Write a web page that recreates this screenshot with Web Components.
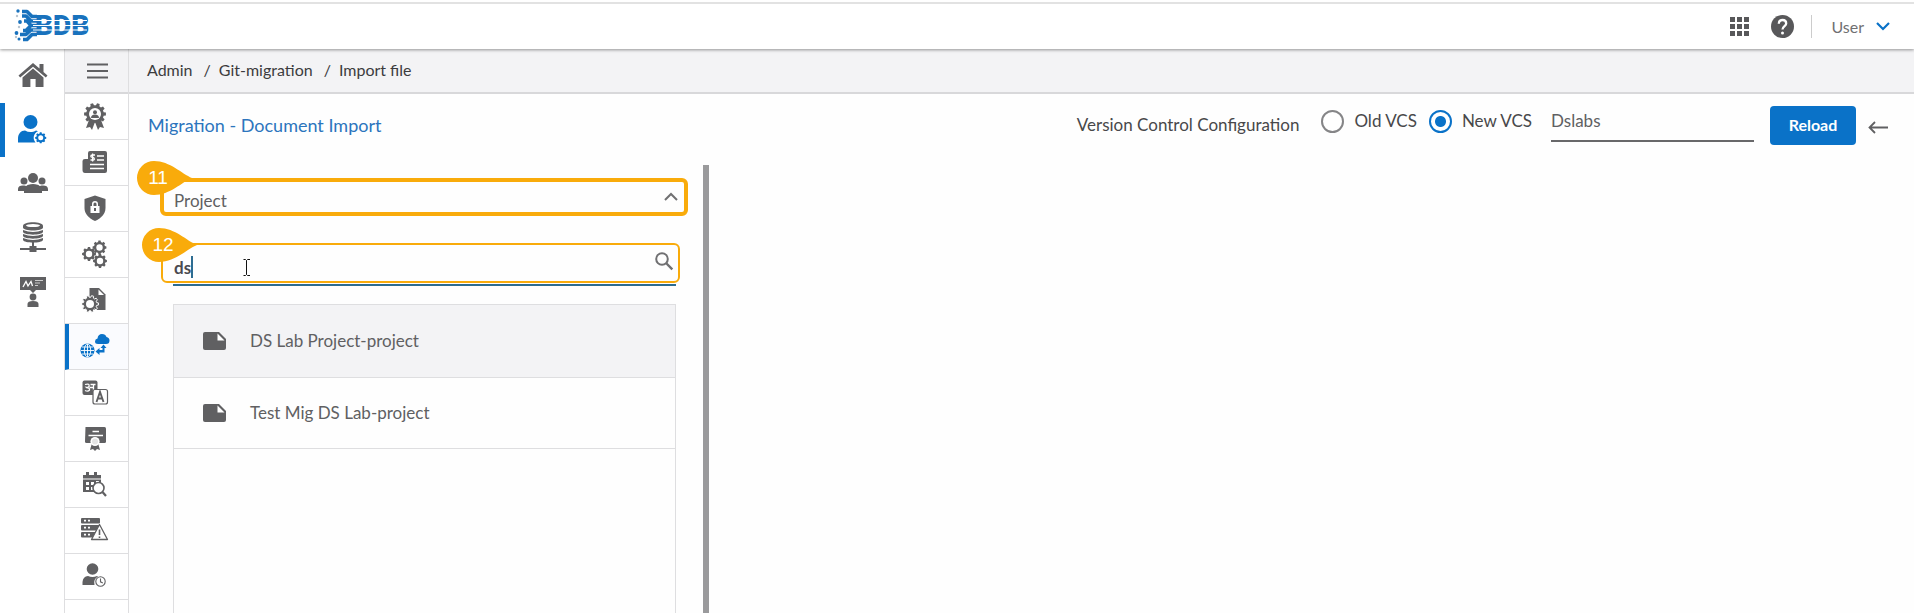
<!DOCTYPE html>
<html lang="en">
<head>
<meta charset="utf-8">
<meta name="viewport" content="width=device-width, initial-scale=1">
<title>Git-migration</title>
<style>
body {
  margin: 0;
  background: #fefefe;
  color: #48484a;
  font: 17px/24px Lato, "Open Sans", sans-serif;
}
</style>
</head>
<body>
<app-shell>
  <top-bar slot="top"></top-bar>
  <nav-rail slot="rail"></nav-rail>
  <side-menu slot="menu"></side-menu>
  <bread-crumb slot="crumbs">
    <a href="#">Admin</a>
    <a href="#">Git-migration</a>
    <a href="#">Import file</a>
  </bread-crumb>
  <vcs-toolbar slot="toolbar">Migration - Document Import</vcs-toolbar>
  <import-panel>
    <call-out slot="type" step="11" weight="thick">
      <type-select>Project</type-select>
    </call-out>
    <call-out slot="search" step="12">
      <search-field value="ds"></search-field>
    </call-out>
    <project-item selected>DS Lab Project-project</project-item>
    <project-item>Test Mig DS Lab-project</project-item>
  </import-panel>
</app-shell>

<script>
// outline of a small cog, centred on x,y
function cog(x, y, r, teeth = 8) {
  const points = [];
  for (let i = 0; i < teeth; i++) {
    const step = (Math.PI * 2) / teeth;
    [[-0.32, 0.8], [-0.2, 1], [0.2, 1], [0.32, 0.8]].forEach(([turn, size]) => {
      const angle = (i + turn) * step;
      points.push(
        (x + Math.cos(angle) * r * size).toFixed(2) + " " + (y + Math.sin(angle) * r * size).toFixed(2)
      );
    });
  }
  return `M${points.join("L")}Z`;
}

const icons = {
  home: `<path d="M15 3 0.5 15.5 2.2 17.5 15 6.7 27.8 17.5 29.5 15.5 25.5 12V4H21.5V8.6Z"/>
    <path d="M15 8.6 4.5 17.4V27H12.4V19H17.6V27H25.5V17.4Z"/>`,
  userCog: `<circle cx="12.5" cy="8" r="7"/><path d="M0 28.500V25C0 19.500 3 16.500 7 16.500 10.500 18.500 14.500 18.500 18 16.500L20 17.300A7 7 0 0 0 17.500 28.500Z"/>
    <path d="${cog(22.7, 23.8, 5.6)}"/><circle cx="22.7" cy="23.800" r="2.500" fill="#fff"/>`,
  group: `<circle cx="15" cy="10" r="5"/><circle cx="6" cy="13" r="3.500"/><circle cx="24" cy="13" r="3.500"/>
    <path d="M0 23V21C0 18 3 17 6.500 17.500Q8.500 18.500 9.500 17 13 16 15 16 17 16 20.500 17 21.500 18.500 23.500 17.500C27 17 30 18 30 21V23H24V25H6V23Z"/>`,
  database: `<path d="M5 4C5-1 25-1 25 4V5.500C25 9.500 5 9.500 5 5.500Z"/><ellipse cx="15" cy="3.600" rx="7" ry="1.500" fill="#fff"/>
    <path d="M5 8Q15 12 25 8V10C24 13.500 6 13.500 5 10ZM5 12Q15 16 25 12V14C24 17.500 6 17.500 5 14ZM5 16Q15 20 25 16V18C24 21.500 6 21.500 5 18Z"/>
    <path d="M14 20h2v4h2.500v2H28v2H18.500v2H11.500v-2H2v-2H11.500v-2H14Z"/>`,
  presenter: `<path d="M2 1H28V14H18L15 17 12 14H2Z"/><path d="M5 11 8 5.500 10 10 13 5.500 14.500 10" fill="none" stroke="#fff" stroke-width="1.300"/>
    <path d="M17 4.500h8M17 7h5M17 9.500h3" stroke="#ccc" stroke-width="1.200"/><circle cx="15" cy="21" r="3.400"/><path d="M9.500 31V28Q9.500 25 15 25T20.500 28V31Z"/>`,
  bars: `<path d="M4 7.500H25M4 14H25M4 20.500H25" fill="none" stroke="currentColor" stroke-width="2"/>`,
  badge: `<path d="M8 18 5 26 9 25 11 28 14 20 17 28 19 25 23 26 20 18Z"/><path d="${cog(14, 12, 11, 10)}"/>
    <circle cx="14" cy="12" r="6" fill="#fff"/><circle cx="14" cy="10.300" r="2"/><path d="M10 16Q10 12.500 14 12.500T18 16Z"/>`,
  news: `<path d="M7 5Q7 3 9 3H24Q26 3 26 5V23Q26 25 24 25H4Q1.500 25 1.500 22V13Q1.500 11 4 11H7Z"/>
    <g fill="none" stroke="#fff" stroke-width="1.600"><path d="M16 8h7M16 12h7M9 16.500H23M9 20.500H23M14 7H11.300Q9.800 7 9.800 8.200 9.800 9.300 11.500 9.300T13.300 10.800 12 12H9.500M11.600 5.500v8" stroke-width="1.300"/></g>`,
  shield: `<path d="M14 1.500 24.500 5V14C24.500 20 20 24.500 14 27 8 24.500 3.500 20 3.500 14V5Z"/>
    <path d="M9.500 12H18.500V19H9.500ZM11 12V10A3 3 0 0 1 17 10V12H15.500V10A1.500 1.500 0 0 0 12.500 10V12Z" fill="#fff"/><path d="M13 14h2v3h-2Z"/>`,
  cogs: `<path d="${cog(8, 14, 7)}"/><path d="${cog(18.5, 7.5, 7)}"/><path d="${cog(19, 21, 7)}"/>
    <g fill="#fff"><circle cx="8" cy="14" r="3.200"/><circle cx="18.500" cy="7.500" r="3.200"/><circle cx="19" cy="21" r="3.200"/></g>`,
  fileCog: `<path d="M8.500 2H18L24.500 8.500V24H8.500Z"/><path d="M17.500 3.500V9H23Z" fill="#fff"/><path d="${cog(9, 18, 8.5, 10)}" stroke="#fff" stroke-width="1"/><circle cx="9" cy="18" r="4" fill="#fff"/>`,
  cloudSync: `<path d="M17 12Q14 12 14 9.500 14 7 16.500 6.500 17 2 21 2 24.500 2 25.500 5 28.500 5.500 28.500 8.500 28.500 12 25 12Z"/>
    <path d="M22.500 12.500 19.500 16H21.500V18H18.500V16L14.500 19.500 18.500 23V20.500H23.500V16H25.500Z"/>
    <circle cx="6.500" cy="18.500" r="7"/><g fill="none" stroke="#fff" stroke-width="0.900"><ellipse cx="6.500" cy="18.500" rx="3.200" ry="6.500"/><path d="M6.500 12V25M0 18.500H13M1 15H12M1 22H12"/></g>`,
  translate: `<rect x="1.500" y="2.500" width="15" height="14.500" rx="2"/><path d="M4 6.500Q9 5 8 8.500 6 10 5.500 9.500 9 10 8.500 12 7 14 4 12.500M8.500 9.500H12M9.500 6.500h5M12.500 6.500V13" fill="none" stroke="#fff" stroke-width="1.300"/>
    <rect x="12" y="11.500" width="14.500" height="14.500" rx="2" fill="#fff" stroke="currentColor" stroke-width="1.200"/><path d="M15.500 24 19 14 22.500 24M16.800 20.500H21.200" fill="none" stroke="currentColor" stroke-width="1.900"/>`,
  certificate: `<path d="M4.500 3H23.500Q25 3 25 4.500V17.500Q25 19 23.500 19H5.500Q4 19 4 17.500Z"/><path d="M11.500 7.500H18M7.500 11.500H22" stroke="#fff" stroke-width="1.600"/>
    <path d="M11 19 9 26 12 25 14 27 16 25 19 26 17 19Z"/><circle cx="14" cy="17.500" r="4.600" fill="#fff"/><circle cx="14" cy="17.500" r="3" fill="#e4e4e4"/>`,
  calendar: `<path d="M2 5H5V2H8V5H13V2H16V5H20V22H2Z"/><g fill="#fff"><path d="M2 8.500h18v1H2Z"/><path d="M5 12h3v3H5ZM10 12h3v3h-3ZM5 17h3v3H5ZM10 17h3v3h-3ZM15 11h3v2h-3Z"/></g>
    <circle cx="17.500" cy="18" r="5.500" fill="#fff" stroke="currentColor" stroke-width="1.600"/><path d="M21.500 22 25 26" stroke="currentColor" stroke-width="2.200"/>`,
  serverAlert: `<rect y="2" width="19" height="5.500" rx="1"/><rect y="9" width="19" height="5.500" rx="1"/><rect y="16" width="19" height="5.500" rx="1"/>
    <path d="M3 4.700h2M7 4.700h2M3 11.700h2M7 11.700h2M3 18.700h2M7 18.700h2" stroke="#fff" stroke-width="1.700"/>
    <path d="M18.500 8.500 26.500 23.500H10.500Z" fill="#fff" stroke="currentColor" stroke-width="1.300" stroke-linejoin="round"/><path d="M18.500 13.500V19M18.500 20.500v1.500" stroke="currentColor" stroke-width="1.600"/>`,
  userClock: `<circle cx="11.500" cy="7" r="5.800"/><path d="M1.500 23V20Q2 14.500 7 14 11.500 16 16 14L17 14.500A7 7 0 0 0 13.500 23Z"/>
    <circle cx="19.500" cy="19.500" r="4.700" fill="#fff" stroke="currentColor" stroke-width="1.100"/><path d="M19.500 16.500V19.800L21.800 21" fill="none" stroke="currentColor" stroke-width="1.100"/>`,
  apps: `<path d="M0 0h5v5H0ZM7 0h5v5H7ZM14 0h5v5h-5ZM0 7h5v5H0ZM7 7h5v5H7ZM14 7h5v5h-5ZM0 14h5v5H0ZM7 14h5v5H7ZM14 14h5v5h-5Z"/>`,
  help: `<circle cx="11.500" cy="11.500" r="11.500"/><path d="M7.800 8.700Q7.800 5 11.500 5T15.200 8.500C15.200 11 11.500 11.300 11.500 14.500" fill="none" stroke="#fff" stroke-width="2.300"/><circle cx="11.500" cy="18" r="1.500" fill="#fff"/>`,
  down: `<path d="M1 1 7 7 13 1" fill="none" stroke="currentColor" stroke-width="2.200"/>`,
  up: `<path d="M1 7 7 1 13 7" fill="none" stroke="currentColor" stroke-width="2"/>`,
  search: `<circle cx="7" cy="7" r="5.800" fill="none" stroke="currentColor" stroke-width="2"/><path d="M11 11 17.300 17.300" stroke="currentColor" stroke-width="2.400"/>`,
  back: `<path d="M20 6.500H1.500M7 1 1.500 6.500 7 12" fill="none" stroke="currentColor" stroke-width="1.800"/>`,
  note: `<path d="M2 0H16L23 7V16Q23 18 21 18H2Q0 18 0 16V2Q0 0 2 0Z"/><path d="M14.500 1.500V8.500H21.500Z" fill="#fff"/>`,
};

class AppIcon extends HTMLElement {
  connectedCallback() {
    const box = this.getAttribute("box") || "28 28";
    const [width, height] = box.split(" ");
    this.attachShadow({ mode: "open" }).innerHTML = `
<style>
:host {
  display: block;
  flex: none;
}
svg {
  display: block;
  overflow: visible;
}
</style>
<svg width="${width}" height="${height}" viewBox="0 0 ${box}" fill="currentColor" aria-hidden="true">${icons[this.getAttribute("name")]}</svg>`;
  }
}

class AppShell extends HTMLElement {
  constructor() {
    super();
    this.attachShadow({ mode: "open" }).innerHTML = `
<style>
:host {
  display: grid;
  grid-template: 49px 1fr / 64px 65px minmax(0, 1fr);
  height: 100vh;
  overflow: hidden;
}
::slotted([slot="top"]) {
  grid-column: 1 / -1;
}
main {
  display: flex;
  flex-direction: column;
  min-width: 0;
}
</style>
<slot name="top"></slot>
<slot name="rail"></slot>
<slot name="menu"></slot>
<main>
  <slot name="crumbs"></slot>
  <slot name="toolbar"></slot>
  <slot></slot>
</main>`;
  }
}

class TopBar extends HTMLElement {
  constructor() {
    super();
    this.attachShadow({ mode: "open" }).innerHTML = `
<style>
:host {
  position: relative;
  z-index: 2;
  display: flex;
  align-items: center;
  box-sizing: border-box;
  padding: 3px 24px 0 14px;
  background: linear-gradient(#fff 2px, #e2e2e2 2px, #e2e2e2 4px, #fff 4px);
  box-shadow: 0 1px 3px rgba(0, 0, 0, 0.4);
  color: #58585a;
}
.logo {
  display: block;
  margin-right: auto;
}
.logo text {
  font: 900 28px Roboto, sans-serif;
}
button {
  display: flex;
  align-items: center;
  border: 0;
  padding: 0;
  background: none;
  color: inherit;
}
.help {
  margin-left: 22px;
}
.user {
  gap: 12px;
  margin-left: 17px;
  border-left: 1px solid #ccc;
  padding-left: 19px;
  font: 16px/23px Lato, sans-serif;
  color: #707072;
}
.user app-icon {
  color: #0a72c8;
}
</style>
<svg class="logo" width="76" height="34" viewBox="0 0 76 34" role="img" aria-label="BDB">
  <g fill="none" stroke="#1972bd" stroke-width="3.600" stroke-linejoin="round">
    <path d="M8 2.500H13L18 7.500H23M8 7H12L17 12H23M10 12H13L17 16.500H23M9 21.500H12L17 16.500M6 25.500H12L17 21H23M9 30.500H13L18 25.500H23"/>
  </g>
  <g fill="#1972bd"><circle cx="4" cy="2" r="1.700"/><circle cx="6" cy="13" r="1.900"/><circle cx="2.500" cy="24" r="1.900"/><circle cx="5" cy="30" r="1.500"/></g>
  <g fill="#b9c4cf"><circle cx="3" cy="7" r="1.200"/><circle cx="5" cy="18" r="1.200"/><circle cx="2" cy="28" r="1.200"/></g>
  <text x="21" y="26" fill="#1972bd">BDB</text>
  <path d="M19 11.500H73M19 16.500H73M19 21H73" stroke="#fff" stroke-width="1.200"/>
</svg>
<button type="button" aria-label="Apps"><app-icon name="apps" box="19 19"></app-icon></button>
<button class="help" type="button" aria-label="Help"><app-icon name="help" box="23 23"></app-icon></button>
<button class="user" type="button">User <app-icon name="down" box="14 8"></app-icon></button>`;
  }
}

class NavRail extends HTMLElement {
  constructor() {
    super();
    const links = [["home", "Home"], ["userCog", "Admin"], ["group", "Users"], ["database", "Data"], ["presenter", "Training"]];
    this.attachShadow({ mode: "open" }).innerHTML = `
<style>
:host {
  display: block;
  background: #fff;
  color: #606062;
}
a {
  display: flex;
  align-items: center;
  justify-content: center;
  height: 54px;
  border-left: 5px solid transparent;
  border-right: 3px solid transparent;
  box-sizing: border-box;
  padding-bottom: 2px;
  color: inherit;
}
a.active {
  border-left-color: #0a72c8;
  color: #0a72c8;
}
</style>
<nav>
  ${links.map(([icon, label], i) => `<a href="#" class="${i === 1 ? "active" : ""}" aria-label="${label}"><app-icon name="${icon}" box="30 30"></app-icon></a>`).join("")}
</nav>`;
  }
}

class SideMenu extends HTMLElement {
  constructor() {
    super();
    const names = ["badge", "news", "shield", "cogs", "fileCog", "cloudSync", "translate", "certificate", "calendar", "serverAlert", "userClock"];
    this.attachShadow({ mode: "open" }).innerHTML = `
<style>
:host {
  display: block;
  border: solid #dedee0;
  border-width: 0 1px;
  background: #fff;
  color: #606062;
}
button, a {
  display: flex;
  align-items: center;
  justify-content: center;
  box-sizing: border-box;
  width: 100%;
  height: 46px;
  border: 0;
  border-bottom: 1px solid #dedee0;
  padding: 0 4px 2px 0;
  color: inherit;
}
button {
  height: 45px;
  padding: 0;
  border-bottom: 2px solid #d8d8da;
  background: #f3f3f5;
}
a.active {
  border-left: 4px solid #0a72c8;
  padding-right: 8px;
  background: #fafbfe;
  color: #0a72c8;
}
</style>
<button type="button" aria-label="Toggle menu"><app-icon name="bars"></app-icon></button>
<nav>
  ${names.map((name) => `<a href="#" class="${name === "cloudSync" ? "active" : ""}" aria-label="${name}"><app-icon name="${name}"></app-icon></a>`).join("")}
</nav>`;
  }
}

class BreadCrumb extends HTMLElement {
  constructor() {
    super();
    this.attachShadow({ mode: "open" }).innerHTML = `
<style>
:host {
  display: flex;
  align-items: center;
  box-sizing: border-box;
  height: 45px;
  border-bottom: 2px solid #d8d8da;
  padding: 0 18px 2px;
  background: #f3f3f5;
  color: #3c3c3e;
  font-size: 16px;
}
::slotted(a) {
  color: inherit;
  text-decoration: none;
}
::slotted(a:not(:first-child))::before {
  content: "/";
  margin: 0 8px 0 11px;
}
</style>
<slot></slot>`;
  }
}

class VcsToolbar extends HTMLElement {
  constructor() {
    super();
    this.attachShadow({ mode: "open" }).innerHTML = `
<style>
:host {
  display: flex;
  align-items: center;
  height: 62px;
  padding: 0 26px 0 19px;
}
h1 {
  margin: 0 auto 0 0;
  font: 18px/24px Lato, sans-serif;
  color: #2c75bd;
}
fieldset {
  display: flex;
  align-items: center;
  margin: 0;
  border: 0;
  padding: 0;
}
.caption {
  margin-right: 22px;
}
label {
  display: flex;
  align-items: center;
  gap: 10px;
  margin-right: 12px;
  padding-bottom: 8px;
}
input[type="radio"] {
  appearance: none;
  box-sizing: border-box;
  width: 23px;
  height: 23px;
  margin: 0;
  border: 2px solid #858587;
  border-radius: 50%;
  background: #fff;
}
input[type="radio"]:checked {
  border-color: #0a72c8;
  background: radial-gradient(circle, #0a72c8 5px, #fff 6px);
}
.name {
  box-sizing: border-box;
  width: 203px;
  height: 36px;
  margin: 0 16px 2px 7px;
  border: 0;
  border-bottom: 2px solid #68686a;
  padding: 0 0 6px;
  background: none;
  color: #606062;
  font: inherit;
}
.reload {
  width: 86px;
  height: 39px;
  border: 0;
  border-radius: 4px;
  background: #0a72c8;
  color: #fff;
  font: bold 16px/24px Lato, sans-serif;
}
.back {
  margin-left: 12px;
  border: 0;
  padding: 4px 0 0;
  background: none;
  color: #606062;
}
</style>
<h1><slot></slot></h1>
<fieldset>
  <span class="caption">Version Control Configuration</span>
  <label><input type="radio" name="vcs"> Old VCS</label>
  <label><input type="radio" name="vcs" checked> New VCS</label>
</fieldset>
<input class="name" type="text" value="Dslabs" aria-label="Repository">
<button class="reload" type="button">Reload</button>
<button class="back" type="button" aria-label="Back"><app-icon name="back" box="20 13"></app-icon></button>`;
  }
}

class ImportPanel extends HTMLElement {
  constructor() {
    super();
    this.attachShadow({ mode: "open" }).innerHTML = `
<style>
:host {
  display: flex;
  flex: 1;
  flex-direction: column;
  box-sizing: border-box;
  width: 32.5%;
  min-height: 0;
  margin-top: 9px;
  border-right: 6px solid #9a9a9c;
  padding: 13px 15px 0 31px;
}
.list {
  flex: 1;
  margin: 21px 12px 0 13px;
  border: 1px solid #dedee0;
  border-bottom: 0;
}
::slotted([slot="search"]) {
  margin: 27px 8px 0 1px;
}
</style>
<slot name="type"></slot>
<slot name="search"></slot>
<div class="list" role="list"><slot></slot></div>`;
  }
}

class CallOut extends HTMLElement {
  constructor() {
    super();
    this.attachShadow({ mode: "open" }).innerHTML = `
<style>
:host {
  position: relative;
  display: block;
  box-sizing: border-box;
  border: 2px solid #f9ab0b;
  border-radius: 6px;
  height: 40px;
}
:host([weight="thick"]) {
  border-width: 4px;
  height: 38px;
}
.marker {
  position: absolute;
  top: -17px;
  left: -22px;
  width: 56px;
  height: 34px;
}
:host([weight="thick"]) .marker {
  top: -21px;
  left: -28px;
}
svg {
  position: absolute;
  inset: 0;
  fill: #f9ab0b;
}
.step {
  position: absolute;
  inset: 0 auto auto 0;
  width: 44px;
  font: 19px/34px "Liberation Sans", sans-serif;
  text-align: center;
  color: #fff;
}
</style>
<slot></slot>
<div class="marker">
  <svg width="56" height="34" viewBox="0 0 56 34"><path d="M56 17C46 13 34 0 18 0A17 17 0 0 0 18 34C34 34 46 21 56 17Z"/></svg>
  <span class="step"></span>
</div>`;
  }

  connectedCallback() {
    this.shadowRoot.querySelector(".step").textContent = this.getAttribute("step");
  }
}

class TypeSelect extends HTMLElement {
  connectedCallback() {
    this.attachShadow({ mode: "open" }).innerHTML = `
<style>
:host {
  display: grid;
  align-items: center;
}
select, app-icon {
  grid-area: 1 / 1;
}
select {
  appearance: none;
  width: 100%;
  height: 30px;
  border: 0;
  padding: 8px 30px 0 10px;
  background: none;
  color: #606062;
  font: inherit;
  line-height: 22px;
}
app-icon {
  justify-self: end;
  margin-right: 6px;
  pointer-events: none;
  color: #707072;
}
</style>
<select aria-label="Document type"><option>${this.textContent.trim()}</option></select>
<app-icon name="up" box="14 8"></app-icon>`;
  }
}

class SearchField extends HTMLElement {
  connectedCallback() {
    this.attachShadow({ mode: "open" }).innerHTML = `
<style>
:host {
  position: relative;
  display: grid;
  height: 39px;
  margin: 0 2px 0 10px;
  border-bottom: 2px solid #2d6c91;
}
input, app-icon {
  grid-area: 1 / 1;
}
input {
  width: 100%;
  box-sizing: border-box;
  height: 39px;
  border: 0;
  padding: 6px 30px 0 1px;
  outline: 0;
  background: none;
  color: #4a4a50;
  font: bold 17px/24px Lato, sans-serif;
}
app-icon {
  justify-self: end;
  margin: 7px 3px 0 0;
  color: #707072;
}
.caret {
  position: absolute;
  top: 11px;
  left: 18px;
  width: 2px;
  height: 22px;
  background: #2d6c91;
}
.pointer {
  position: absolute;
  top: 14px;
  left: 70px;
}
</style>
<input type="text" value="${this.getAttribute("value")}" aria-label="Search">
<app-icon name="search" box="18 18"></app-icon>
<span class="caret"></span>
<svg class="pointer" width="8" height="17" viewBox="0 0 8 17" fill="none" stroke="#111"><path d="M0.500 0.500H2.500L3.500 1.500 4.500 0.500H7M3.500 1.500V15.500M0.500 16.500H2.500L3.500 15.500 4.500 16.500H7"/></svg>`;
  }
}

class ProjectItem extends HTMLElement {
  constructor() {
    super();
    this.attachShadow({ mode: "open" }).innerHTML = `
<style>
:host {
  display: flex;
  align-items: center;
  gap: 24px;
  box-sizing: border-box;
  height: 71px;
  border-bottom: 1px solid #dedee0;
  padding-left: 29px;
  color: #606062;
}
:host([selected]) {
  height: 73px;
  background: #f3f3f5;
}
</style>
<app-icon name="note" box="23 18"></app-icon>
<slot></slot>`;
  }

  connectedCallback() {
    this.setAttribute("role", "listitem");
  }
}

customElements.define("app-icon", AppIcon);
customElements.define("app-shell", AppShell);
customElements.define("top-bar", TopBar);
customElements.define("nav-rail", NavRail);
customElements.define("side-menu", SideMenu);
customElements.define("bread-crumb", BreadCrumb);
customElements.define("vcs-toolbar", VcsToolbar);
customElements.define("import-panel", ImportPanel);
customElements.define("call-out", CallOut);
customElements.define("type-select", TypeSelect);
customElements.define("search-field", SearchField);
customElements.define("project-item", ProjectItem);
</script>
</body>
</html>
